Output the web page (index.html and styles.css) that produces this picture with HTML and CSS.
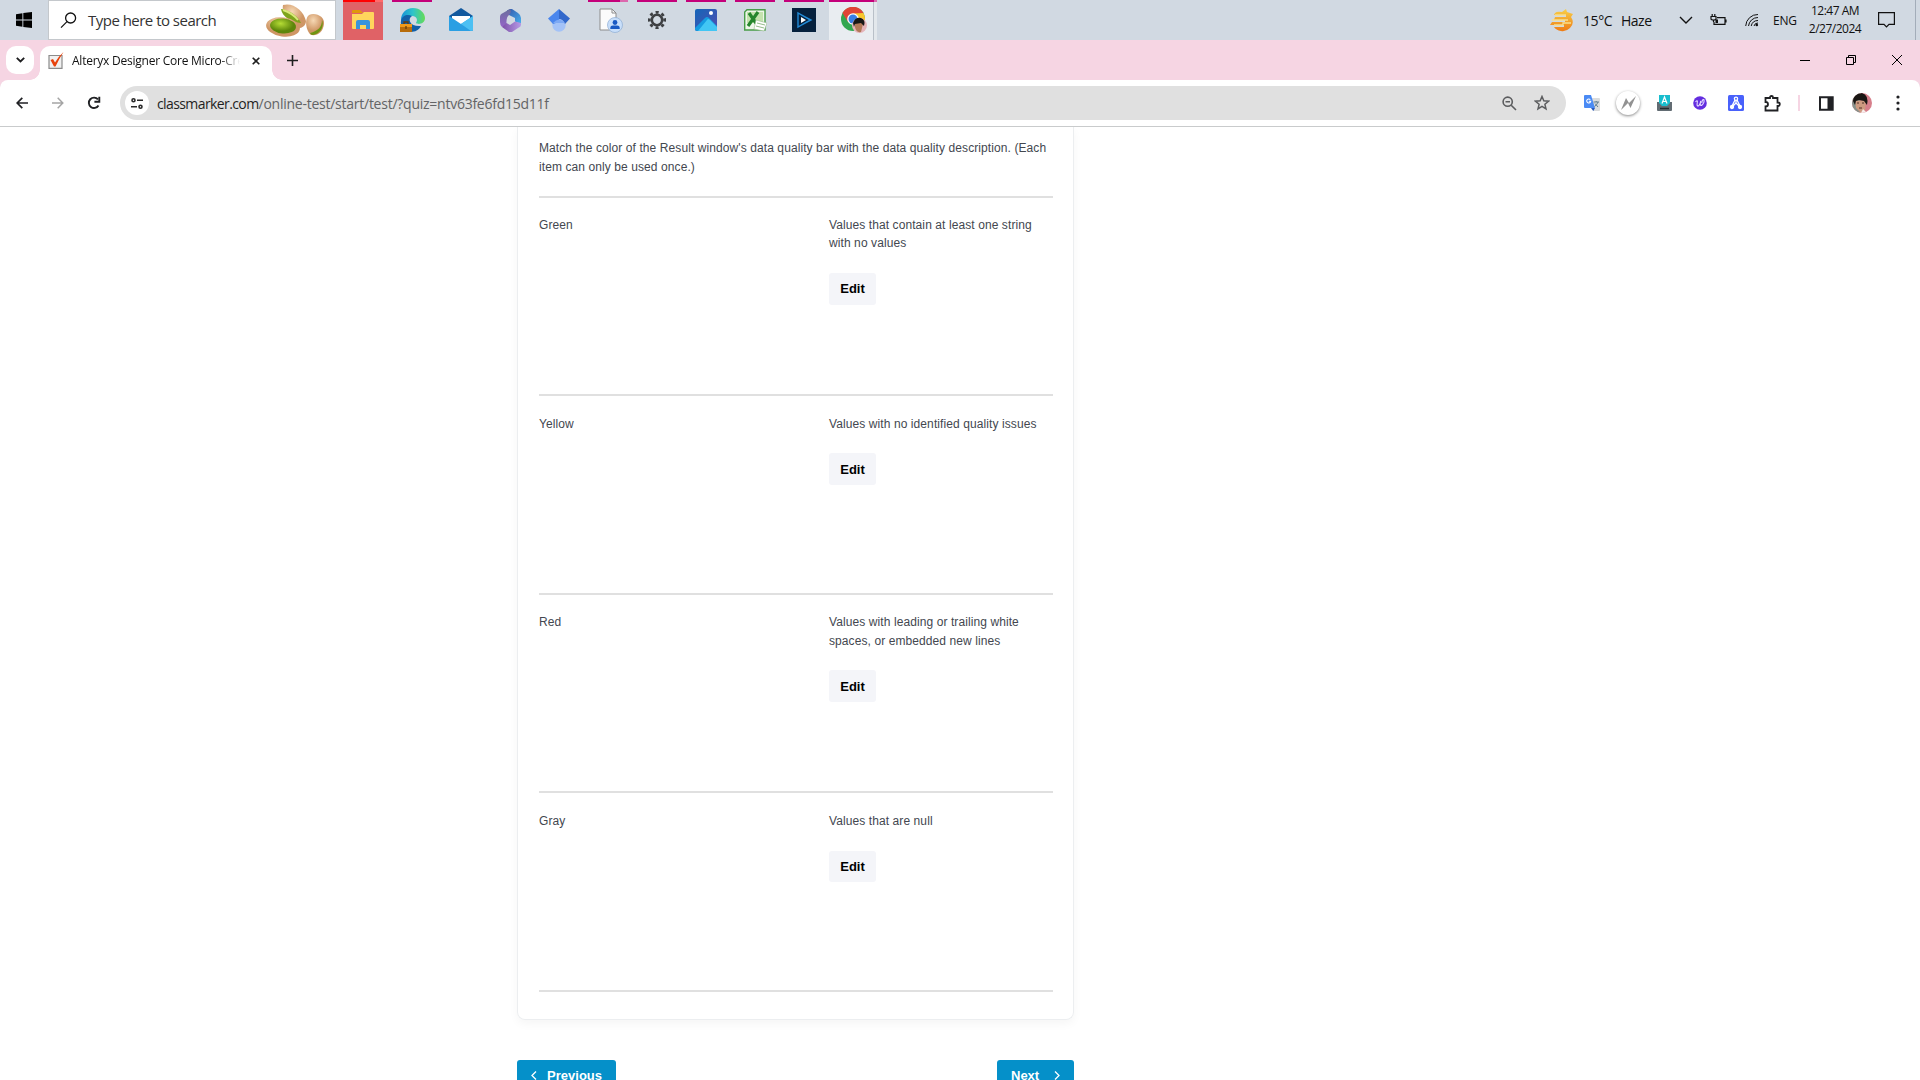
FILE: index.html
```html
<!DOCTYPE html>
<html lang="en">
<head>
<meta charset="utf-8">
<title>Alteryx Designer Core Micro-Credential</title>
<link rel="stylesheet" href="styles.css">
</head>
<body>
<header class="taskbar">
  <div class="start"><svg width="16" height="16" viewBox="0 0 16 16"><path d="M0 2.3 6.4 1.3V7.6H0zM7.3 1.1 16 0V7.6H7.3zM0 8.5H6.4V14.8L0 13.8zM7.3 8.5H16V16L7.3 15z"/></svg></div>
  <div class="search">
    <svg class="lens" width="17" height="17" viewBox="0 0 17 17" fill="none" stroke="#111" stroke-width="1.3"><circle cx="10.6" cy="6" r="5"/><path d="M7 9.6 1 15.6"/></svg>
    <span class="search-text">Type here to search</span>
    <svg class="nuts" width="59" height="34" viewBox="0 0 59 34"><defs><radialGradient id="shell" cx=".4" cy=".3"><stop offset="0" stop-color="#f6d8b4"/><stop offset="1" stop-color="#cf9665"/></radialGradient><radialGradient id="nut" cx=".4" cy=".35"><stop offset="0" stop-color="#b5dc35"/><stop offset="1" stop-color="#5d860b"/></radialGradient></defs><path d="M17 2C27-1 38 8 40 18c0 5-5 8-9 7C26 16 15 15 17 2z" fill="url(#shell)"/><path d="M15 6c8 1 17 7 20 14C26 19 16 14 15 6z" fill="#7ea51c"/><path d="M17 7c6 2 11 5 15 10" stroke="#d9e97a" stroke-width="2" fill="none"/><ellipse cx="17" cy="24" rx="17" ry="9.5" fill="url(#shell)" transform="rotate(8 17 24)"/><ellipse cx="17" cy="23" rx="13" ry="7.5" fill="url(#nut)" transform="rotate(5 17 23)"/><path d="M43 12c7-3 16 2 15 9-1 8-6 12-13 11-5-4-7-16-2-20z" fill="url(#shell)"/><path d="M56 17c0 7-4 11-12 13 1 3 5 2 8 0 4-3 6-8 4-13z" fill="#6e9512"/></svg>
  </div>
  <nav class="apps">
    <div class="app hot two"><svg width="22" height="20" viewBox="0 0 22 20"><path d="M0 1Q0 0 1 0H8L11 3H0z" fill="#e0980c"/><path d="M0 4H10L12 2H21Q22 2 22 3V18Q22 19 21 19H1Q0 19 0 18z" fill="#ffd65c"/><path d="M4 12Q4 10 6 10H16Q18 10 18 12V19H14V15H8V19H4z" fill="#3a94dc"/></svg></div>
    <div class="app run"><svg width="25" height="25" viewBox="0 0 25 25"><defs><linearGradient id="eg"><stop offset="0" stop-color="#1591d8"/><stop offset=".5" stop-color="#2fc4c9"/><stop offset="1" stop-color="#65dc55"/></linearGradient></defs><path d="M1 12C1 5 6 0 13 0s12 5 12 10c0 6-7 7-9 5 2-3 1-7-4-7-6 0-10 2-11 8z" fill="url(#eg)"/><path d="M1 13C2 7 8 6 12 8c-5 3-2 11 9 10-3 6-10 7-14 5-4-2-7-6-6-10z" fill="#1260a8"/><path d="M0 16H12V24H0z" fill="#b76c0b"/><path d="M0 16H12V19H0z" fill="#f09a18"/><path d="M4 16V14H8V16M6 18V21" fill="none" stroke="#663c0a" stroke-width="1.3"/></svg></div>
    <div class="app"><svg width="24" height="24" viewBox="0 0 24 24"><path d="M0 8 12 0 24 8V13H0z" fill="#12599e"/><path d="M3 8H21V17H3z" fill="#fff"/><path d="M0 8 12 16 24 8V22Q24 23 23 23H1Q0 23 0 22z" fill="#2a9fe3"/><path d="M12 16 24 8V22L22 23z" fill="#4cc0f3"/></svg></div>
    <div class="app"><svg width="21" height="23" viewBox="0 0 21 23"><defs><linearGradient id="ma" x2="0" y2="1"><stop offset="0" stop-color="#6b6f9c"/><stop offset="1" stop-color="#9464c8"/></linearGradient><linearGradient id="mb"><stop offset="0" stop-color="#7c50a8"/><stop offset="1" stop-color="#b79be6"/></linearGradient><linearGradient id="mc" x2="1" y2="1"><stop offset="0" stop-color="#3457ab"/><stop offset="1" stop-color="#49b2ee"/></linearGradient></defs><path d="M7 1.5 10 0H12L18 4Q21 6 21 9V15L15 12.5V9L7 5z" fill="url(#mc)"/><path d="M10 0Q12 3 9 6 6 8 6.500 16L2 18Q0 16 0 13V8Q0 5 3 4z" fill="url(#ma)"/><path d="M2 18 6.500 14 10 16 15 12.500 21 14V16Q21 18 18 19L12 23H9z" fill="url(#mb)"/></svg></div>
    <div class="app"><svg width="22" height="23" viewBox="0 0 22 23"><circle cx="11" cy="16" r="6.7" fill="#a3c2f7"/><path d="M0 9.5 11 0V13L5 15z" fill="#4a86ed"/><path d="M11 0 22 9.5 17 15Q15 10 11 10z" fill="#3268cb"/><path d="M5 14Q11 7 17 14" fill="#7da9f4"/></svg></div>
    <div class="app run two doc"><svg width="24" height="25" viewBox="0 0 24 25"><path d="M1 1H13L17 5V22H1z" fill="#fbfbfb" stroke="#8c8c8c"/><path d="M13 1V5H17" fill="none" stroke="#8c8c8c"/><circle cx="16" cy="17" r="7.5" fill="#c9dffa" stroke="#8bacd4" stroke-width=".7"/><circle cx="16" cy="14.5" r="2.4" fill="#1959c4"/><path d="M11.3 21Q11 17.6 14 17.6H18Q21 17.6 20.7 21z" fill="#1959c4"/></svg></div>
    <div class="app run"><svg width="18" height="18" viewBox="-9 -9 18 18"><g stroke="#3e4043" fill="none"><circle r="5.2" stroke-width="2.6"/><circle r="7.7" stroke-width="2.8" stroke-dasharray="3 3.05" transform="rotate(-12)"/></g></svg></div>
    <div class="app run"><svg width="22" height="22" viewBox="0 0 22 22"><defs><linearGradient id="ph" x2="1" y2="1"><stop offset="0" stop-color="#1465b8"/><stop offset="1" stop-color="#514fb1"/></linearGradient></defs><rect width="22" height="22" rx="2" fill="url(#ph)"/><path d="M0 19 10 9Q12 7 14 9L22 17V20Q22 22 20 22H2Q0 22 0 20z" fill="#169be1"/><path d="M3 22 12 11Q13 9 15 11L22 18V22z" fill="#42c6f4"/><circle cx="16" cy="4" r="2" fill="#fff"/></svg></div>
    <div class="app run"><svg width="23" height="23" viewBox="0 0 23 23"><path d="M3 .7H21V21H.7V3z" fill="#eef7e9" stroke="#479c47" stroke-width="1.4"/><path d="M3 3H19V14H3z" fill="#c4e3ae"/><path d="M5 4 14 17M14 3 4 17" stroke="#25862c" stroke-width="3.2"/><path d="M12 11 23 14 20 22 10 20z" fill="#fff" stroke="#9abd91" stroke-width=".6"/><path d="M13 14 21 16M12 17 20 19" stroke="#78aa6b" stroke-width=".8"/></svg></div>
    <div class="app run"><svg width="24" height="24" viewBox="0 0 24 24"><rect width="24" height="24" fill="#06213d"/><path d="M6 5V19L18 12zM6 5 19 12 6 19" fill="none" stroke="#218bd7" stroke-width="1.4"/><path d="M9 9 14 12 9 15z" fill="#fff"/></svg></div>
    <div class="app run active two"><svg width="26" height="26" viewBox="0 0 26 26"><circle cx="12" cy="12" r="12" fill="#32a750"/><path d="M1.5 6A12 12 0 0 1 22.5 6L12 12 7 15z" fill="#df4536"/><path d="M22.4 6A12 12 0 0 1 13 24L17 14 12 6.5z" fill="#f9c62d"/><circle cx="12" cy="12" r="5.800" fill="#fff"/><circle cx="12" cy="12" r="4.500" fill="#377fe4"/><circle cx="18.5" cy="18.5" r="7.5" fill="#e5b5bb"/><path d="M14 15Q19 12 22 17L20 25Q15 26 14 20z" fill="#b27958"/><path d="M12 16Q14 10 20 11 25 13 23 19L20 16 14 17 13 20z" fill="#171717"/></svg></div>
  </nav>
  <div class="tray">
    <div class="weather"><svg width="24" height="23" viewBox="0 0 24 23"><defs><linearGradient id="sun" y2="1" x2="0"><stop offset="0" stop-color="#f8cf48"/><stop offset="1" stop-color="#ee7c16"/></linearGradient></defs><path d="M5 4Q7 2 12 3L16 0 17 3 23 5 21 8Q25 14 20 19 16 23 11 22 6 21 4 18H14V16H0L2 13H15V11H4L5 8H16V6H4z" fill="url(#sun)"/><path d="M5 6H16M2 11H18M4 16H13V14H21" fill="none" stroke="#f9df8c" stroke-width="1.3"/></svg><span class="temp">15°C</span><span class="haze">Haze</span></div>
    <svg class="t-chev" width="14" height="8" viewBox="0 0 14 8" fill="none" stroke="#111" stroke-width="1.4"><path d="M1 1 7 7 13 1"/></svg>
    <svg class="t-bat" width="17" height="13" viewBox="0 0 17 13" fill="none" stroke="#111" stroke-width="1.2"><path d="M7 3.6H15V10.4H4V8M16 5.5V8.5M1 2.5H6V5Q6 6 3.5 6 1 6 1 5zM2.2 0V2M4.8 0V2M3.5 6V8"/><path d="M5.5 5.5H8V9H5.5z" fill="#111" stroke="none"/></svg>
    <svg class="t-wifi" width="14" height="14" viewBox="0 0 14 14" fill="none" stroke="#111"><path d="M.7 13A12 12 0 0 1 13 1.5M3.5 13A9.5 9.5 0 0 1 13 4.5M6.2 13A7 7 0 0 1 13 7.5M9 13A4 4 0 0 1 13 10"/><circle cx="11.8" cy="12" r="1.3" fill="#111" stroke="none"/></svg>
    <span class="lang">ENG</span>
    <div class="clock"><span class="time">12:47 AM</span><span class="date">2/27/2024</span></div>
    <svg class="t-note" width="17" height="16" viewBox="0 0 17 16" fill="none" stroke="#111" stroke-width="1.2"><path d="M.6.6H16.4V12.4H11L8.5 15 6 12.4H.6z"/></svg>
    <i class="desk"></i>
  </div>
</header>

<div class="tabs">
  <div class="tab-search"><svg width="9" height="6" viewBox="0 0 9 6" fill="none" stroke="#1d1d1f" stroke-width="1.8"><path d="M.8.8 4.5 4.5 8.2.8"/></svg></div>
  <div class="tab">
    <svg width="17" height="17" viewBox="0 0 17 17"><path d="M1 3.500H14V16.300H1z" fill="#f1f1f1" stroke="#8b8b8b" stroke-width="1.2"/><path d="M2.500 8 5 7 7 10.500Q10 5 15.500 0 11 7 7.500 14.500H6z" fill="#e8420c"/></svg>
    <span class="tab-title">Alteryx Designer Core Micro-Cre</span>
    <svg class="tab-x" width="8" height="8" viewBox="0 0 8 8" stroke="#1f1f1f" stroke-width="1.6"><path d="M.7.7 7.3 7.3M7.3.7.7 7.3"/></svg>
  </div>
  <svg class="plus" width="11" height="11" viewBox="0 0 11 11" stroke="#1f1f1f" stroke-width="1.6"><path d="M5.5 0V11M0 5.5H11"/></svg>
  <div class="controls">
    <svg width="10" height="10" viewBox="0 0 10 10" stroke="#000"><path d="M0 5.5H10"/></svg>
    <svg width="10" height="10" viewBox="0 0 10 10" fill="none" stroke="#000"><path d="M.5 2.5H7.5V9.5H.5zM2.5 2.5V.5H9.5V7.5H7.5"/></svg>
    <svg width="10" height="10" viewBox="0 0 10 10" stroke="#000"><path d="M0 0 10 10M10 0 0 10"/></svg>
  </div>
</div>

<div class="toolbar-wrap">
<div class="toolbar">
  <div class="cell"><svg width="12" height="12" viewBox="0 0 12 12" fill="none" stroke="#202124" stroke-width="1.7"><path d="M12 6H1.3M6.3.8 1.2 6 6.3 11.2"/></svg></div>
  <div class="cell"><svg width="12" height="12" viewBox="0 0 12 12" fill="none" stroke="#a5a5a5" stroke-width="1.5"><path d="M0 6H10.7M5.7.8 10.8 6 5.7 11.2"/></svg></div>
  <div class="cell"><svg width="14" height="14" viewBox="0 0 14 14" fill="none" stroke="#202124" stroke-width="1.9"><path d="M11.5 9.5A5.2 5.2 0 1 1 11 3.4"/><path d="M12.3.8V5.7H7.4"/></svg></div>
  <div class="omni">
    <span class="site"><svg width="12" height="11" viewBox="0 0 12 11" fill="none" stroke="#2a2a2a" stroke-width="1.6"><circle cx="2.500" cy="2.300" r="1.500"/><path d="M6 2.300H12M0 8.700H6"/><circle cx="9.500" cy="8.700" r="1.500"/></svg></span>
    <span class="url"><span class="host">classmarker.com</span><span class="path">/online-test/start/test/?quiz=ntv63fe6fd15d11f</span></span>
    <svg class="zoom" width="15" height="15" viewBox="0 0 15 15" fill="none" stroke="#5c5d5f" stroke-width="1.6"><circle cx="5.700" cy="5.700" r="4.600"/><path d="M9.200 9.200 14 14M3.500 5.700H8"/></svg>
    <svg class="star" width="16" height="16" viewBox="0 0 16 16" fill="none" stroke="#5c5d5f" stroke-width="1.5"><path d="M8 1.5 9.8 5.8 14.5 6.2 10.9 9.3 12 13.9 8 11.4 4 13.9 5.1 9.3 1.5 6.2 6.2 5.8z"/></svg>
  </div>
  <div class="cell"><svg width="16" height="16" viewBox="0 0 16 16"><path d="M6 3H15Q16 3 16 4V15Q16 16 15 16H9z" fill="#dadcdd"/><path d="M1 0H7L11 13H1Q0 13 0 12V1Q0 0 1 0z" fill="#4a8af4"/><path d="M7 13H11L9.3 16z" fill="#2559be"/><path d="M9.5 7H15M12.2 6V7M14 7Q13 10 10.5 11.5M11 8.5 14 12" stroke="#5f7d8f" fill="none"/><path d="M6.3 4.7A2 2 0 1 0 6.7 6.3H4.8" stroke="#fff" fill="none" stroke-width="1.1"/></svg></div>
  <div class="cell"><span class="bolt"><svg width="15" height="14" viewBox="0 0 15 14"><path d="M0 14 5 2 8 7 15 0 9.5 12 7 7z" fill="#929292"/></svg></span></div>
  <div class="cell"><svg width="15" height="16" viewBox="0 0 15 16"><path d="M0 7H15V15Q15 16 14 16H1Q0 16 0 15z" fill="#626c73"/><path d="M2 0H13V8L10 11H5L2 8z" fill="#19bdce"/><path d="M5 8.500 7.500 2 10 8.500M6 6.500H9" stroke="#fff" fill="none" stroke-width="1.2"/><path d="M3 13.500H12" stroke="#22292d" stroke-width="1.5"/></svg></div>
  <div class="cell"><svg width="14" height="14" viewBox="0 0 14 14"><circle cx="7" cy="7" r="6.8" fill="#642ee0"/><path d="M2.500 6Q5 3 4.200 7 3.500 11 6 9.500 7.500 7.500 7.700 5 6.500 10 8.500 9.500 12 6.500 10.800 3.500 9.200 3 8.800 7" fill="none" stroke="#e6dcff" stroke-width="1.1"/></svg></div>
  <div class="cell"><svg width="16" height="16" viewBox="0 0 16 16" stroke="#fff" stroke-width="1.3"><rect width="16" height="16" rx="1.5" fill="#4961fb" stroke="none"/><path d="M8 4.5V8L4 12M8 8 12 12M7 5 4 11M9 5 12 11" fill="none"/><circle cx="8" cy="3.7" r="1.6" fill="#4961fb"/><circle cx="4" cy="12" r="1.5" fill="#fff"/><circle cx="12" cy="12" r="1.5" fill="#fff"/></svg></div>
  <div class="cell"><svg width="17" height="17" viewBox="0 0 17 17" fill="none" stroke="#202124" stroke-width="1.8"><path d="M1.500 3H6V2.500Q6 1 7.500 1T9 2.500V3H13.500V7.500H14.200Q15.800 7.500 15.800 9.200T14.200 11H13.500V15.500H1.500V11.500Q4 11.500 4 9.200T1.500 7z"/></svg></div>
  <i class="sep"></i>
  <div class="cell"><svg width="15" height="15" viewBox="0 0 15 15"><path d="M1 1.2H13.7V13.8H1z" fill="none" stroke="#202124" stroke-width="2"/><path d="M8.500 1H14V14H8.500z" fill="#202124"/></svg></div>
  <div class="cell"><svg width="20" height="20" viewBox="0 0 20 20"><defs><clipPath id="av"><circle cx="10" cy="10" r="10"/></clipPath></defs><g clip-path="url(#av)"><path d="M0 0H20V20H0z" fill="#d77f8b"/><path d="M0 0H8V20H0z" fill="#86918a"/><path d="M3 8 14 7 13 18 9 20 4 15z" fill="#cd9a80"/><path d="M1 8Q2 0 10 0 17 2 15 12L12 8 7 7 4 8 3 12z" fill="#1b1714"/><path d="M5 10H7M10 10H12M7 15H10" stroke="#513128"/><path d="M11 16 15 20H9z" fill="#f7eeee"/></g></svg></div>
  <div class="cell"><svg width="4" height="16" viewBox="0 0 4 16" fill="#202124"><circle cx="2" cy="2" r="1.6"/><circle cx="2" cy="8" r="1.6"/><circle cx="2" cy="14" r="1.6"/></svg></div>
</div>
</div>

<main class="page">
  <div class="quiz">
    <section class="card">
      <p class="question">Match the color of the Result window's data quality bar with the data quality description. (Each item can only be used once.)</p>
      <div class="row"><div class="term">Green</div><div class="answer"><p>Values that contain at least one string with no values</p><button class="edit">Edit</button></div></div>
      <div class="row"><div class="term">Yellow</div><div class="answer"><p>Values with no identified quality issues</p><button class="edit">Edit</button></div></div>
      <div class="row"><div class="term">Red</div><div class="answer"><p>Values with leading or trailing white spaces, or embedded new lines</p><button class="edit">Edit</button></div></div>
      <div class="row"><div class="term">Gray</div><div class="answer"><p>Values that are null</p><button class="edit">Edit</button></div></div>
    </section>
    <div class="pager">
      <button class="go"><svg width="6" height="9" viewBox="0 0 6 9" fill="none" stroke="#fff" stroke-width="1.3"><path d="M5 .5 1 4.5 5 8.5"/></svg><span>Previous</span></button>
      <button class="go next"><span>Next</span><svg width="6" height="9" viewBox="0 0 6 9" fill="none" stroke="#fff" stroke-width="1.3"><path d="M1 .5 5 4.5 1 8.5"/></svg></button>
    </div>
  </div>
</main>
</body>
</html>
```
FILE: styles.css
```css
* { box-sizing: border-box; }
body { margin: 0; width: 1920px; height: 1080px; overflow: hidden; background: #fff; display: flex; flex-direction: column; font-family: "Open Sans", "Noto Sans", sans-serif; color: #111; }
svg { display: block; flex: none; }
p { margin: 0; }

.taskbar { height: 40px; flex: none; display: flex; background: #d1d9e2; }
.start { width: 48px; display: flex; align-items: center; justify-content: center; }
.search { width: 288px; height: 40px; display: flex; align-items: center; background: #fff; border: 1px solid #c4c8cc; padding: 0 10px 0 11px; }
.search-text { margin-left: 11px; font-size: 15px; letter-spacing: -0.52px; color: #333; flex: 1; white-space: nowrap; }
.apps { display: flex; gap: 9px; margin-left: 7px; }
.app { width: 40px; height: 40px; display: flex; align-items: center; justify-content: center; border-top: 2px solid transparent; padding-bottom: 2px; }
.run { border-top-color: #c4007a; }
.two { border-image: linear-gradient(90deg, #c4007a 32px, #dc68ae 32px) 2 0 0 0; }
.hot { background: #e06266; border-image: linear-gradient(90deg, #f00 32px, #ff6b6b 32px) 2 0 0 0; }
.doc { padding-left: 5px; }
.active { width: 48px; margin-left: -4px; padding-left: 2px; background: linear-gradient(90deg, #e9edf1 44px, #b9c0c8 44px 45px, #e3e8ec 45px); border-image: linear-gradient(90deg, #c4007a 45px, #dc68ae 45px) 2 0 0 0; }
.tray { margin-left: auto; display: flex; align-items: center; font-size: 14px; white-space: nowrap; }
.weather { display: flex; align-items: center; width: 129px; }
.temp { margin-left: 9px; width: 38px; letter-spacing: -0.4px; }
.haze { letter-spacing: -0.5px; }
.t-chev { margin-right: 17px; }
.t-bat { margin-right: 18px; }
.t-wifi { margin-right: 14px; }
.lang { width: 32px; font-size: 12px; letter-spacing: -0.2px; }
.clock { width: 60px; display: flex; flex-direction: column; align-items: center; font-size: 12px; line-height: 18px; letter-spacing: -0.5px; }
.t-note { margin: 0 20px 0 13px; }
.desk { width: 5px; height: 40px; border-left: 1px solid #a3adb9; }

.tabs { height: 40px; flex: none; display: flex; align-items: center; background: #f6d5e3; padding-left: 6px; }
.tab-search { width: 28px; height: 28px; border-radius: 10px; background: #fff; display: flex; align-items: center; justify-content: center; }
.tab { position: relative; margin-left: 6px; width: 232px; height: 34px; align-self: flex-end; display: flex; align-items: center; padding: 0 12px 5px 8px; background: #fff; border-radius: 10px 10px 0 0; }
.tab::before, .tab::after { content: ""; position: absolute; bottom: 0; width: 10px; height: 10px; }
.tab::before { right: 100%; background: radial-gradient(circle at 0 0, transparent 9.5px, #fff 10px); }
.tab::after { left: 100%; background: radial-gradient(circle at 100% 0, transparent 9.5px, #fff 10px); }
.tab-title { width: 168px; margin-left: 7px; font-size: 12px; letter-spacing: -0.24px; white-space: nowrap; overflow: hidden; mask-image: linear-gradient(90deg, #000 148px, transparent 168px); }
.tab-x { margin-left: auto; }
.plus { margin-left: 15px; }
.controls { margin: 0 18px 0 auto; display: flex; gap: 36px; }

.toolbar-wrap { flex: none; background: #f6d5e3; }
.toolbar { height: 47px; display: flex; align-items: center; background: #fff; border-radius: 8px 8px 0 0; box-shadow: inset 0 -1px #c9cbcc; padding: 0 4px 1px 4px; }
.cell { width: 36px; display: flex; justify-content: center; flex: none; }
.omni { flex: 1; height: 34px; margin: 0 8px; display: flex; align-items: center; background: #e0e0e0; border-radius: 17px; padding: 0 16px 0 5px; }
.site { width: 24px; height: 24px; border-radius: 50%; background: #fff; display: flex; align-items: center; justify-content: center; }
.url { margin-left: 8px; flex: 1; font-size: 14px; white-space: nowrap; color: #636466; letter-spacing: -0.25px; }
.host { color: #1f1f1f; letter-spacing: -0.6px; }
.zoom { margin-right: 17px; }
.bolt { width: 24px; height: 24px; border-radius: 50%; background: #fff; box-shadow: 0 1px 3px #0007; display: flex; align-items: center; justify-content: center; }
.sep { width: 2px; height: 16px; margin: 0 8px; background: #f6d5e3; }

.page { flex: 1; min-height: 0; overflow: hidden; font-family: "Liberation Sans", Arial, sans-serif; font-size: 12px; line-height: 18.75px; letter-spacing: 0.09px; color: #43474f; }
.quiz { width: 557px; margin-left: 517px; }
.card { border: 1.5px solid #eceef0; border-top: 0; border-radius: 0 0 8px 8px; box-shadow: 0 4px 10px #0000000a; padding: 12px 20px 27px 21px; height: 892.5px; }
.question { padding-bottom: 19px; border-bottom: 2px solid #e0e0e0; }
.row { height: 198.6px; border-bottom: 2px solid #e0e0e0; padding-top: 18.7px; display: grid; grid-template-columns: 290px 215px; line-height: 18.2px; }
.edit { margin-top: 20.5px; width: 47px; height: 31.5px; border: 0; border-radius: 3px; background: #f4f5f9; font: bold 13px "Liberation Sans", Arial, sans-serif; color: #000; padding: 0; display: block; }
.pager { margin-top: 40.5px; display: flex; justify-content: space-between; }
.go { height: 31px; width: 99px; border: 0; border-radius: 3px; background: #0590c9; color: #fff; font: bold 13px "Liberation Sans", Arial, sans-serif; padding: 0 14px; display: flex; align-items: center; justify-content: space-between; }
.next { width: 77px; }
```
